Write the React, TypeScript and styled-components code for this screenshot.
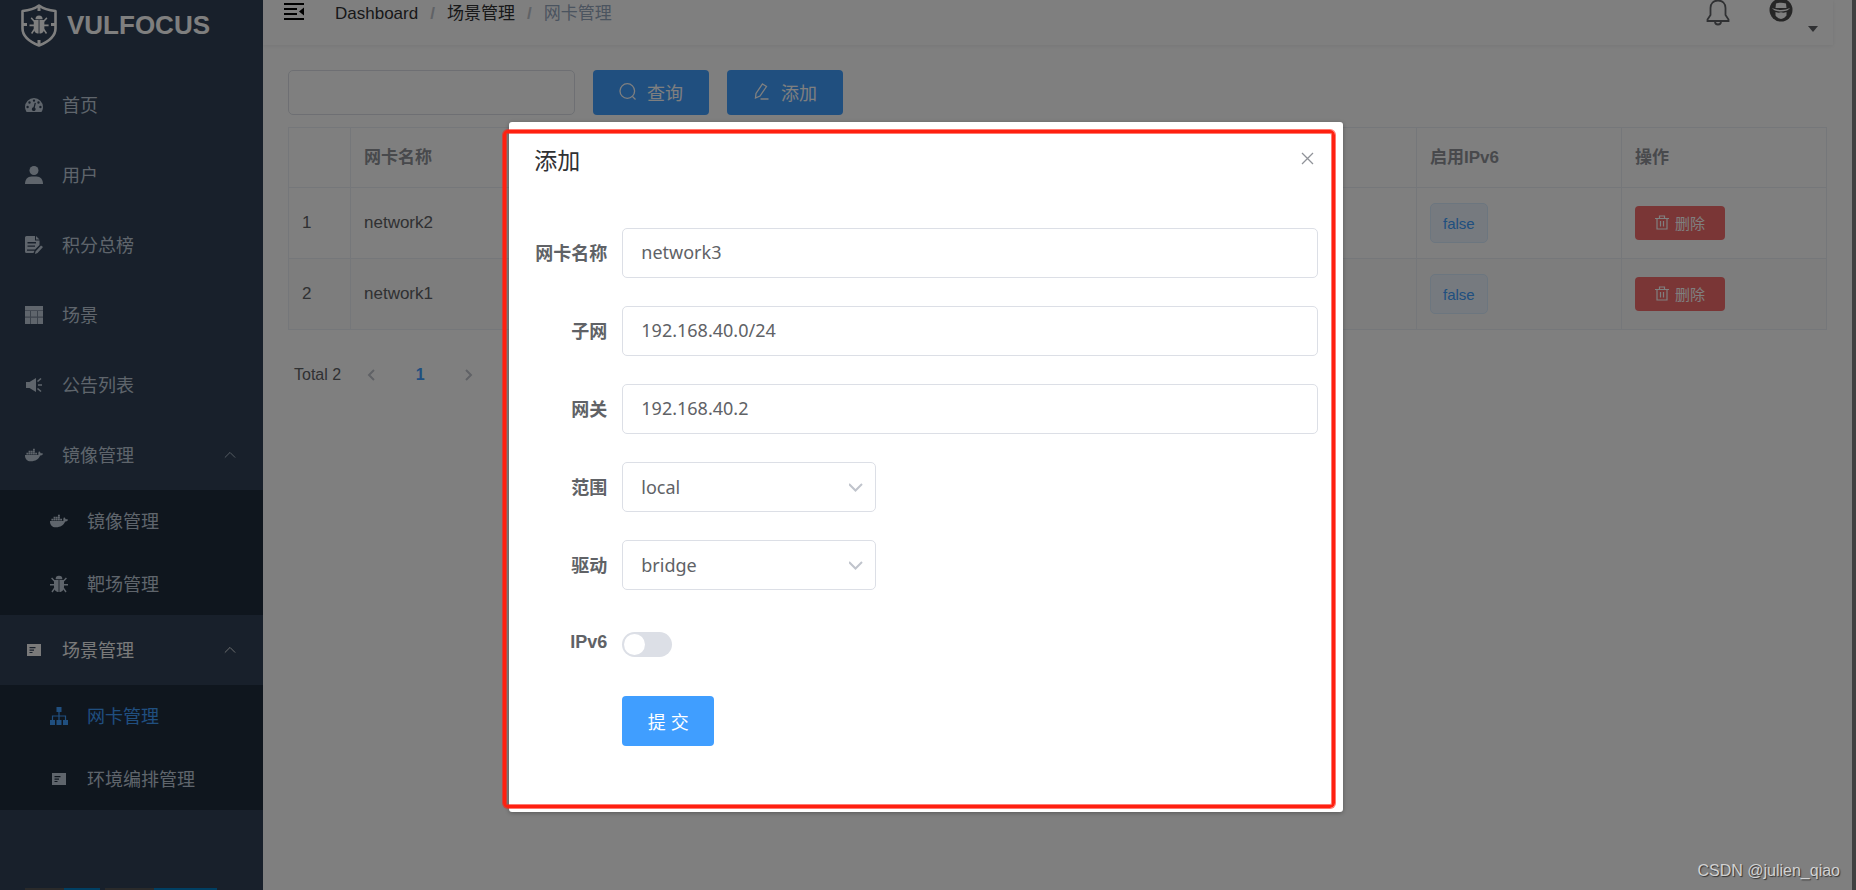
import React, { useState } from "react";
import styled, { createGlobalStyle } from "styled-components";
import { FaDocker } from "react-icons/fa";

const GlobalStyle = createGlobalStyle`
  *, *::before, *::after { box-sizing: border-box; }
  body {
    margin: 0;
    overflow: hidden;
    font-family: "Liberation Sans", "Noto Sans CJK SC", sans-serif;
    color: #606266;
    background: #fff;
  }
  button, input, select { font-family: inherit; }
`;

/* ---------- page frame ---------- */

const Page = styled.div`
  position: relative;
  display: flex;
  height: 100vh;
  overflow: hidden;
`;

const Sidebar = styled.aside`
  display: flex;
  flex-direction: column;
  flex: 0 0 263px;
  background: #304156;
  overflow: hidden;
`;

const Main = styled.main`
  flex: 1;
  min-width: 0;
`;

const ScrollTrack = styled.div`
  position: relative;
  z-index: 3;
  flex: 0 0 4px;
  background: #404040;
`;

/* ---------- sidebar ---------- */

const Brand = styled.a`
  display: flex;
  align-items: center;
  gap: 10px;
  flex: none;
  height: 50px;
  margin-bottom: 20px;
  padding-left: 21px;
  color: #fff;
  font-size: 26px;
  font-weight: 700;
  text-decoration: none;
`;

const Menu = styled.nav`
  flex: none;
`;

const MenuItem = styled.a<{ $tone?: string }>`
  display: flex;
  align-items: center;
  gap: 19px;
  height: 70px;
  padding: 0 27px 0 25px;
  color: ${(p) => p.$tone ?? "#bfcbd9"};
  font-size: 18px;
  line-height: 24px;
  text-decoration: none;
`;

const MenuText = styled.span`
  flex: 1;
  padding-top: 2px;
`;

const SubMenu = styled.div`
  display: grid;
  grid-auto-rows: 1fr;
  height: 125px;
  background: #1f2d3d;
`;

const SubItem = styled(MenuItem)`
  height: auto;
  padding-left: 50px;
`;

const Badges = styled.div`
  display: flex;
  flex: none;
  gap: 5px;
  margin-top: 78px;
  padding-left: 25px;
`;

const Badge = styled.span<{ $left: number; $right: number }>`
  width: ${(p) => p.$left + p.$right}px;
  height: 25px;
  background: linear-gradient(to right, #555 ${(p) => p.$left}px, #007ec6 ${(p) => p.$left}px);
`;

/* ---------- top bar ---------- */

const TopBar = styled.header`
  display: flex;
  align-items: flex-start;
  height: 45px;
  margin-right: 19px;
  padding: 0 15px 0 21px;
  box-shadow: 0 1px 4px rgba(0, 21, 41, 0.08);
`;

const IconButton = styled.button`
  display: flex;
  padding: 0;
  border: 0;
  background: none;
  color: #606266;
`;

const Crumbs = styled.nav`
  display: flex;
  flex: 1;
  gap: 12px;
  margin-left: 31px;
  font-size: 17px;
  line-height: 28px;
`;

const Crumb = styled.a`
  color: #303133;
  text-decoration: none;
`;

const LastCrumb = styled.span`
  color: #97a8be;
`;

const Slash = styled.span`
  color: #c0c4cc;
  font-weight: 700;
`;

const UserButton = styled(IconButton)`
  align-items: flex-end;
  gap: 15px;
  margin-left: 39px;
`;

/* ---------- list page ---------- */

const Content = styled.section`
  padding: 25px;
`;

const Toolbar = styled.div`
  display: flex;
  gap: 18px;
  margin-bottom: 12px;
`;

const SearchInput = styled.input`
  width: 287px;
  height: 45px;
  padding: 0 18px;
  border: 1px solid #dcdfe6;
  border-radius: 5px;
  background: #fff;
  font-size: 17px;
`;

const PrimaryButton = styled.button`
  display: flex;
  align-items: center;
  justify-content: center;
  gap: 11px;
  height: 45px;
  padding: 0 26px 2px;
  border: 0;
  border-radius: 4px;
  background: #409eff;
  color: #fff;
  font-size: 18px;
`;

const Table = styled.table`
  width: 100%;
  table-layout: fixed;
  border-collapse: separate;
  border-spacing: 0;
  border: solid #ebeef5;
  border-width: 1px 0 0 1px;
  text-align: left;
  font-size: 17px;
`;

const Th = styled.th<{ $width?: number }>`
  width: ${(p) => (p.$width ? `${p.$width}px` : "auto")};
  height: 60px;
  padding: 0 12px 4px 13px;
  border: solid #ebeef5;
  border-width: 0 1px 1px 0;
  color: #909399;
  font-weight: 700;
`;

const Row = styled.tr`
  &:nth-child(even) { background: #fafafa; }
`;

const Td = styled.td`
  height: 71px;
  padding: 0 12px 0 13px;
  border: solid #ebeef5;
  border-width: 0 1px 1px 0;
`;

const Tag = styled.span`
  display: inline-flex;
  align-items: center;
  height: 40px;
  padding: 0 12px;
  border: 1px solid #d9ecff;
  border-radius: 5px;
  background: #ecf5ff;
  color: #409eff;
  font-size: 15px;
  vertical-align: middle;
`;

const DangerButton = styled.button`
  display: inline-flex;
  align-items: center;
  gap: 6px;
  height: 34px;
  padding: 0 20px 2px;
  border: 0;
  border-radius: 4px;
  background: #f56c6c;
  color: #fff;
  font-size: 15px;
  vertical-align: middle;
`;

const Pager = styled.nav`
  display: flex;
  align-items: center;
  height: 34px;
  margin-top: 28px;
  padding-left: 6px;
  font-size: 16px;
`;

const PagerTotal = styled.span`
  margin-right: 7px;
`;

const PagerButton = styled.button<{ $current?: boolean }>`
  display: flex;
  align-items: center;
  justify-content: center;
  width: 48px;
  height: 34px;
  padding: 0;
  border: 0;
  background: none;
  color: ${(p) => (p.$current ? "#409eff" : "#c0c4cc")};
  font-size: 16px;
  font-weight: 700;
`;

/* ---------- dialog ---------- */

const Overlay = styled.div`
  position: absolute;
  inset: 0 4px 0 0;
  z-index: 2;
  padding-top: 122px;
  background: rgba(0, 0, 0, 0.5);
`;

const Dialog = styled.div`
  position: relative;
  width: 45%;
  margin: 0 auto;
  padding: 25px 25px 66px;
  border-radius: 3px;
  background: #fff;
  box-shadow: 0 1px 4px rgba(0, 0, 0, 0.3);
`;

const Highlight = styled.div`
  position: absolute;
  inset: 8px 8px 4px -6px;
  border: 3px solid #ff2010;
  border-radius: 5px;
  box-shadow: 0 0 0 1px rgba(255, 32, 16, 0.6), inset 0 0 0 1px rgba(255, 32, 16, 0.6);
  pointer-events: none;
`;

const DialogHead = styled.div`
  display: flex;
  align-items: flex-start;
  justify-content: space-between;
  height: 28px;
  margin-bottom: 53px;
`;

const CloseButton = styled(IconButton)`
  padding: 5px 4px;
`;

const DialogTitle = styled.h2`
  margin: 0;
  color: #303133;
  font-size: 23px;
  line-height: 28px;
  font-weight: 400;
`;

const Form = styled.form`
  display: grid;
  grid-template-columns: 73px 1fr;
  grid-auto-rows: 50px;
  gap: 28px 15px;
  align-items: center;
`;

const Label = styled.label`
  padding-bottom: 2px;
  font-size: 18px;
  font-weight: 700;
  text-align: right;
  white-space: nowrap;
`;

const fieldFont = `"Noto Sans", "Noto Sans CJK SC", sans-serif`;

const TextInput = styled.input`
  width: 100%;
  height: 50px;
  padding: 0 18px 2px;
  border: 1px solid #dcdfe6;
  border-radius: 5px;
  color: #606266;
  && { font-family: ${fieldFont}; }
  font-size: 18px;
`;

const SelectBox = styled.div`
  position: relative;
  width: 254px;
  color: #c0c4cc;

  svg {
    position: absolute;
    top: 18px;
    right: 13px;
    pointer-events: none;
  }
`;

const Select = styled.select`
  appearance: none;
  width: 100%;
  height: 50px;
  padding: 0 38px 0 18px;
  border: 1px solid #dcdfe6;
  border-radius: 5px;
  background: #fff;
  color: #606266;
  && { font-family: ${fieldFont}; }
  font-size: 18px;
  display: block;
`;

const Switch = styled.input`
  appearance: none;
  display: block;
  width: 50px;
  height: 25px;
  margin: 2px 0 0;
  padding: 2px;
  border-radius: 13px;
  background: ${(p) => (p.checked ? "#409eff" : "#dcdfe6")};

  &::before {
    content: "";
    display: block;
    width: 21px;
    height: 21px;
    margin-left: ${(p) => (p.checked ? "25px" : "0")};
    border-radius: 50%;
    background: #fff;
  }
`;

const SubmitButton = styled(PrimaryButton)`
  grid-column: 2;
  justify-self: start;
  width: 92px;
  height: 50px;
  padding: 0;
`;

const Watermark = styled.div`
  position: absolute;
  right: 16px;
  bottom: 9px;
  z-index: 3;
  color: #d2d2d2;
  font-size: 16px;
  line-height: 20px;
  text-shadow: 1px 1px 1px #333;
`;

/* ---------- icons ---------- */

const Glyph = ({ children }: { children: React.ReactNode }) => (
  <svg width="18" height="18" viewBox="0 0 18 18" fill="currentColor" aria-hidden="true">
    {children}
  </svg>
);

const BugShape = () => (
  <>
    <path d="M5.6 4.2a3.4 3.4 0 0 1 6.8 0z" />
    <path d="M4 5h4.6v12H7.6C5.300 16.500 4 14.500 4 12zM9.400 5H14v7c0 2.500-1.300 4.500-3.600 5h-1z" />
    <path
      d="M4.500 6 1.600 3M13.500 6l2.900-3M4.500 9.700H0M13.500 9.700H18M4.800 13l-2.800 4M13.200 13l2.800 4"
      fill="none"
      stroke="currentColor"
      strokeWidth="1.400"
    />
  </>
);

const LogoIcon = () => (
  <svg width="36" height="43" viewBox="0 0 36 43" fill="none" aria-hidden="true">
    <path
      d="M18 1.500C14 4.500 7 6.500 1.500 7v17.500c0 8.500 9 14 16.500 17 7.500-3 16.500-8.500 16.500-17V7C29 6.500 22 4.500 18 1.500z"
      stroke="currentColor"
      strokeWidth="2.600"
      strokeLinejoin="round"
    />
    <path d="M18 2v5M18 36v5M2 20.500h4M30 20.500h4" stroke="currentColor" strokeWidth="3" />
    <g transform="translate(8.500 10.500) scale(1.060 1.120)" fill="currentColor">
      <BugShape />
    </g>
  </svg>
);

const DashboardIcon = () => (
  <Glyph>
    <path
      fillRule="evenodd"
      d="M9 2a9 9 0 0 1 9 9c0 1.800-.5 3.400-1.400 4.700-.2.200-.4.300-.7.300H2.100c-.3 0-.5-.1-.7-.3A8.500 8.500 0 0 1 0 11a9 9 0 0 1 9-9zM2.600 9.800a1.200 1.200 0 1 0 0 2.400 1.200 1.200 0 0 0 0-2.400zm12.800 0a1.200 1.200 0 1 0 0 2.400 1.200 1.200 0 0 0 0-2.400zM4.500 5.300a1.200 1.200 0 1 0 0 2.400 1.200 1.200 0 0 0 0-2.400zm9 0a1.200 1.200 0 1 0 0 2.400 1.200 1.200 0 0 0 0-2.400zM9 3.400a1.200 1.200 0 1 0 0 2.400 1.200 1.200 0 0 0 0-2.400zm.7 3.300-1.200 4.600a1.900 1.900 0 1 0 1.300.3l1.100-4.600z"
    />
  </Glyph>
);

const UserIcon = () => (
  <Glyph>
    <circle cx="9" cy="4.500" r="4.500" />
    <path d="M0 18c0-4.500 2.500-7.500 6.500-7.500h5c4 0 6.500 3 6.500 7.500z" />
  </Glyph>
);

const ScoreIcon = () => (
  <Glyph>
    <path
      fillRule="evenodd"
      d="M1.500 0H10v4.500h4.500V9l-4.500 4.500H2v1.300h7.500L8.500 17H1.500A1.500 1.500 0 0 1 0 15.500v-14A1.500 1.500 0 0 1 1.500 0zM2.500 6v1.400H11V6zm0 3.400v1.400H10V9.400z"
    />
    <path d="M11 0v3.500h3.500zM16 9.500l2 1.500-5.500 6-2.500 1 .5-2.500z" />
  </Glyph>
);

const GridIcon = () => (
  <Glyph>
    <path d="M0 0h18v18H0z" opacity="0.5" />
    <path d="M0 0h18v4.300H0zM0 5h5v5.500H0zM6 5h6v5.500H6zM13 5h5v5.500h-5zM0 11.700h5V18H0zM6 11.700h6V18H6zM13 11.700h5V18h-5z" />
  </Glyph>
);

const HornIcon = () => (
  <Glyph>
    <path d="M1 6h3.500L11 2v14l-6.500-4H1z" />
    <path d="m12.500 5.500 3.500-3M13 9h4M12.500 12.500l3.500 3" fill="none" stroke="currentColor" strokeWidth="1.600" />
  </Glyph>
);

const BugIcon = () => (
  <Glyph>
    <BugShape />
  </Glyph>
);

const FormIcon = () => (
  <Glyph>
    <path
      fillRule="evenodd"
      d="M2 3h14v12H2zM4.500 6v1.200h6V6zm0 2.500v1.200H9V8.500zm0 2.400v1.200h3v-1.200z"
    />
  </Glyph>
);

const TreeIcon = () => (
  <Glyph>
    <path d="M6.500 0h5v5h-5zM0 13h5v5H0zM6.500 13h5v5h-5zM13 13h5v5h-5z" />
    <path d="M9 5v8M2.500 13V9h13v4" fill="none" stroke="currentColor" strokeWidth="1.200" />
  </Glyph>
);

const Chevron = ({ d, size, width = 1 }: { d: string; size: number; width?: number }) => (
  <svg width={size} height={size} viewBox="0 0 14 14" fill="none" stroke="currentColor" strokeWidth={width} aria-hidden="true">
    <path d={d} />
  </svg>
);

const CollapseIcon = () => (
  <svg width="20" height="23" viewBox="0 0 20 23" aria-hidden="true">
    <path d="M0 4h20M0 9h13M0 14h13M0 19h20" stroke="#000" strokeWidth="2" />
    <path d="M20 7.500v8l-5-4z" fill="#000" />
  </svg>
);

const BellIcon = () => (
  <svg width="24" height="26" viewBox="0 0 24 26" fill="none" stroke="currentColor" strokeWidth="1.800" aria-hidden="true">
    <path d="M12 .5C7.500.5 4.500 3.500 4.500 8v7L1.500 19.500V21h21v-1.500l-3-4.500V8C19.500 3.500 16.500.5 12 .5zM9 21.500a3 3 0 0 0 6 0" />
  </svg>
);

const AvatarIcon = () => (
  <svg width="24" height="32" viewBox="0 0 24 32" aria-hidden="true">
    <circle cx="12" cy="10" r="11.500" fill="#4d4d4d" />
    <path d="M7 3.500c3-1 7-1 10 0l.5 4.500h-11z" fill="#fff" />
    <path d="M3 8c5 2.500 13 2.500 18 0-1 1.500-2.500 2.400-4 2.800-3 .8-7 .8-10 0C5.500 10.400 4 9.500 3 8z" fill="#fff" />
    <path d="M6.500 12c2 .8 3.500 1 5.500.3 2 .7 3.500.5 5.500-.3v3.500c-1 1.500-3 3-5.500 3.500-2.500-.5-4.500-2-5.500-3.500z" fill="#fff" />
  </svg>
);

const CaretIcon = () => (
  <svg width="10" height="6" viewBox="0 0 10 6" aria-hidden="true">
    <path d="M0 0h10L5 6z" fill="#606266" />
  </svg>
);

const SearchIcon = () => (
  <svg width="17" height="17" viewBox="0 0 17 17" fill="none" stroke="currentColor" strokeWidth="1.300" aria-hidden="true">
    <circle cx="8.300" cy="8" r="7.300" />
    <path d="m13.500 13.500 3 3" />
  </svg>
);

const EditIcon = () => (
  <svg width="17" height="17" viewBox="0 0 17 17" fill="none" stroke="currentColor" strokeWidth="1.300" aria-hidden="true">
    <path d="m9.500 1 4 2.500-6.500 9.500-4.500 2 .5-4.500zM7.500 16h8" />
  </svg>
);

const TrashIcon = () => (
  <svg width="14" height="15" viewBox="0 0 14 15" fill="none" stroke="currentColor" strokeWidth="1.200" aria-hidden="true">
    <path d="M0 3.500h14M4.500 3V1h5v2M2 3.500V14h10V3.500M5.500 6v5.500M8.500 6v5.500" />
  </svg>
);

const CloseIcon = () => (
  <svg width="13" height="13" viewBox="0 0 13 13" fill="none" stroke="#909399" strokeWidth="1.300" aria-hidden="true">
    <path d="m1 1 11 11M12 1 1 12" />
  </svg>
);

const UP = "m1 10 6-6 6 6";
const DOWN = "m0 4 6.500 6.500L13 4";
const LEFT = "M9 2 4 7l5 5";
const RIGHT = "m5 2 5 5-5 5";

/* ---------- data ---------- */

const topItems = [
  { text: "首页", icon: <DashboardIcon /> },
  { text: "用户", icon: <UserIcon /> },
  { text: "积分总榜", icon: <ScoreIcon /> },
  { text: "场景", icon: <GridIcon /> },
  { text: "公告列表", icon: <HornIcon /> },
];

const networks = ["network2", "network1"];

export default function App() {
  const [name, setName] = useState("network3");
  const [subnet, setSubnet] = useState("192.168.40.0/24");
  const [gateway, setGateway] = useState("192.168.40.2");
  const [ipv6, setIpv6] = useState(false);

  return (
    <Page>
      <GlobalStyle />
      <Sidebar>
        <Brand href="#">
          <LogoIcon />
          VULFOCUS
        </Brand>
        <Menu aria-label="主菜单">
          {topItems.map((item) => (
            <MenuItem href="#" key={item.text}>
              {item.icon}
              <MenuText>{item.text}</MenuText>
            </MenuItem>
          ))}
          <MenuItem href="#">
            <FaDocker size={18} />
            <MenuText>镜像管理</MenuText>
            <Chevron d={UP} size={12} />
          </MenuItem>
          <SubMenu>
            <SubItem href="#">
              <FaDocker size={18} />
              <MenuText>镜像管理</MenuText>
            </SubItem>
            <SubItem href="#">
              <BugIcon />
              <MenuText>靶场管理</MenuText>
            </SubItem>
          </SubMenu>
          <MenuItem href="#" $tone="#f4f4f5">
            <FormIcon />
            <MenuText>场景管理</MenuText>
            <Chevron d={UP} size={12} />
          </MenuItem>
          <SubMenu>
            <SubItem href="#" $tone="#409eff">
              <TreeIcon />
              <MenuText>网卡管理</MenuText>
            </SubItem>
            <SubItem href="#">
              <FormIcon />
              <MenuText>环境编排管理</MenuText>
            </SubItem>
          </SubMenu>
        </Menu>
        <Badges aria-hidden="true">
          <Badge $left={39} $right={36} />
          <Badge $left={49} $right={63} />
        </Badges>
      </Sidebar>

      <Main>
        <TopBar>
          <IconButton type="button" aria-label="折叠菜单">
            <CollapseIcon />
          </IconButton>
          <Crumbs aria-label="面包屑">
            <Crumb href="#">Dashboard</Crumb>
            <Slash>/</Slash>
            <Crumb href="#">场景管理</Crumb>
            <Slash>/</Slash>
            <LastCrumb>网卡管理</LastCrumb>
          </Crumbs>
          <IconButton type="button" aria-label="通知">
            <BellIcon />
          </IconButton>
          <UserButton type="button" aria-label="账户">
            <AvatarIcon />
            <CaretIcon />
          </UserButton>
        </TopBar>

        <Content>
          <Toolbar>
            <SearchInput type="text" aria-label="网卡名称" />
            <PrimaryButton type="button">
              <SearchIcon />
              查询
            </PrimaryButton>
            <PrimaryButton type="button">
              <EditIcon />
              添加
            </PrimaryButton>
          </Toolbar>

          <Table>
            <thead>
              <tr>
                <Th $width={62} />
                <Th>网卡名称</Th>
                <Th $width={205}>启用IPv6</Th>
                <Th $width={205}>操作</Th>
              </tr>
            </thead>
            <tbody>
              {networks.map((network, i) => (
                <Row key={network}>
                  <Td>{i + 1}</Td>
                  <Td>{network}</Td>
                  <Td>
                    <Tag>false</Tag>
                  </Td>
                  <Td>
                    <DangerButton type="button">
                      <TrashIcon />
                      删除
                    </DangerButton>
                  </Td>
                </Row>
              ))}
            </tbody>
          </Table>

          <Pager aria-label="分页">
            <PagerTotal>Total 2</PagerTotal>
            <PagerButton type="button" aria-label="上一页">
              <Chevron d={LEFT} size={14} width={2} />
            </PagerButton>
            <PagerButton type="button" $current>
              1
            </PagerButton>
            <PagerButton type="button" aria-label="下一页">
              <Chevron d={RIGHT} size={14} width={2} />
            </PagerButton>
          </Pager>
        </Content>
      </Main>
      <ScrollTrack />

      <Overlay>
        <Dialog role="dialog" aria-labelledby="dialog-title">
          <DialogHead>
            <DialogTitle id="dialog-title">添加</DialogTitle>
            <CloseButton type="button" aria-label="关闭">
              <CloseIcon />
            </CloseButton>
          </DialogHead>
          <Form onSubmit={(e) => e.preventDefault()}>
            <Label htmlFor="name">网卡名称</Label>
            <TextInput id="name" value={name} onChange={(e) => setName(e.target.value)} />
            <Label htmlFor="subnet">子网</Label>
            <TextInput id="subnet" value={subnet} onChange={(e) => setSubnet(e.target.value)} />
            <Label htmlFor="gateway">网关</Label>
            <TextInput id="gateway" value={gateway} onChange={(e) => setGateway(e.target.value)} />
            <Label htmlFor="scope">范围</Label>
            <SelectBox>
              <Select id="scope" defaultValue="local">
                <option>local</option>
              </Select>
              <Chevron d={DOWN} size={14} width={2} />
            </SelectBox>
            <Label htmlFor="driver">驱动</Label>
            <SelectBox>
              <Select id="driver" defaultValue="bridge">
                <option>bridge</option>
              </Select>
              <Chevron d={DOWN} size={14} width={2} />
            </SelectBox>
            <Label htmlFor="ipv6">IPv6</Label>
            <Switch
              id="ipv6"
              type="checkbox"
              role="switch"
              checked={ipv6}
              onChange={(e) => setIpv6(e.target.checked)}
            />
            <SubmitButton type="submit">提 交</SubmitButton>
          </Form>
          <Highlight />
        </Dialog>
      </Overlay>
      <Watermark>CSDN @julien_qiao</Watermark>
    </Page>
  );
}
